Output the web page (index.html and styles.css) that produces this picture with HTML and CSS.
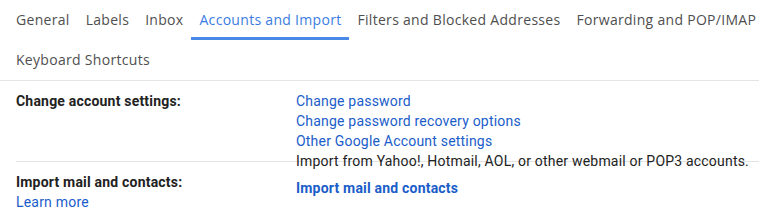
FILE: index.html
```html
<!DOCTYPE html>
<html lang="en">
<head>
    <meta charset="UTF-8">
    <title>Settings - Accounts and Import</title>
    <link rel="stylesheet" href="styles.css">
</head>
<body>
    <div class="tabs">
        <a class="tab">General</a>
        <a class="tab">Labels</a>
        <a class="tab">Inbox</a>
        <a class="tab active">Accounts and Import</a>
        <a class="tab">Filters and Blocked Addresses</a>
        <a class="tab">Forwarding and POP/IMAP</a>
        <a class="tab">Keyboard Shortcuts</a>
    </div>

    <div class="settings">
        <div class="row">
            <div class="label">Change account settings:</div>
            <div class="value">
                <a class="link">Change password</a>
                <a class="link">Change password recovery options</a>
                <a class="link">Other Google Account settings</a>
            </div>
        </div>

        <div class="row sep">
            <div class="label">
                Import mail and contacts:
                <a class="link plain">Learn more</a>
            </div>
            <div class="value shift">
                <div class="desc">Import from Yahoo!, Hotmail, AOL, or other webmail or POP3 accounts.</div>
                <a class="link strong">Import mail and contacts</a>
            </div>
        </div>
    </div>
</body>
</html>
```

FILE: styles.css
```css
*{
    margin: 0;
    padding: 0;
    box-sizing: border-box;
}
body{
    font-family: Roboto, "Liberation Sans", sans-serif;
    font-size: 14px;
    letter-spacing: 0.2px;
    color: #222;
    background: #fff;
    overflow: hidden;
}
.tabs{
    display: flex;
    flex-wrap: wrap;
    padding-left: 8px;
    margin-right: -10px;
    border-bottom: 1px solid #e4e4e4;
}
.tab{
    font-family: "Open Sans", Roboto, sans-serif;
    font-size: 14px;
    letter-spacing: 0.3px;
    color: #4f4f4f;
    height: 40px;
    line-height: 40px;
    padding: 0 8px;
    border-bottom: 3px solid transparent;
    white-space: nowrap;
}
.tab.active{
    color: #3b7ce2;
    border-bottom-color: #4a89e8;
}
.settings{
    line-height: 20px;
}
.row{
    display: flex;
    padding: 10px 0 10px 16px;
}
.row.sep{
    margin-left: 16px;
    padding-left: 0;
    border-top: 1px solid #e4e4e4;
}
.label{
    width: 280px;
    flex-shrink: 0;
    font-weight: bold;
    color: #222;
}
.value{
    display: flex;
    flex-direction: column;
}
.value.shift{
    margin-top: -21px;
}
.link{
    color: #1a5dc9;
    cursor: pointer;
}
.link.plain{
    display: block;
    font-weight: normal;
}
.link.strong{
    font-weight: bold;
    margin-top: 7px;
}
.desc{
    white-space: nowrap;
}
```
